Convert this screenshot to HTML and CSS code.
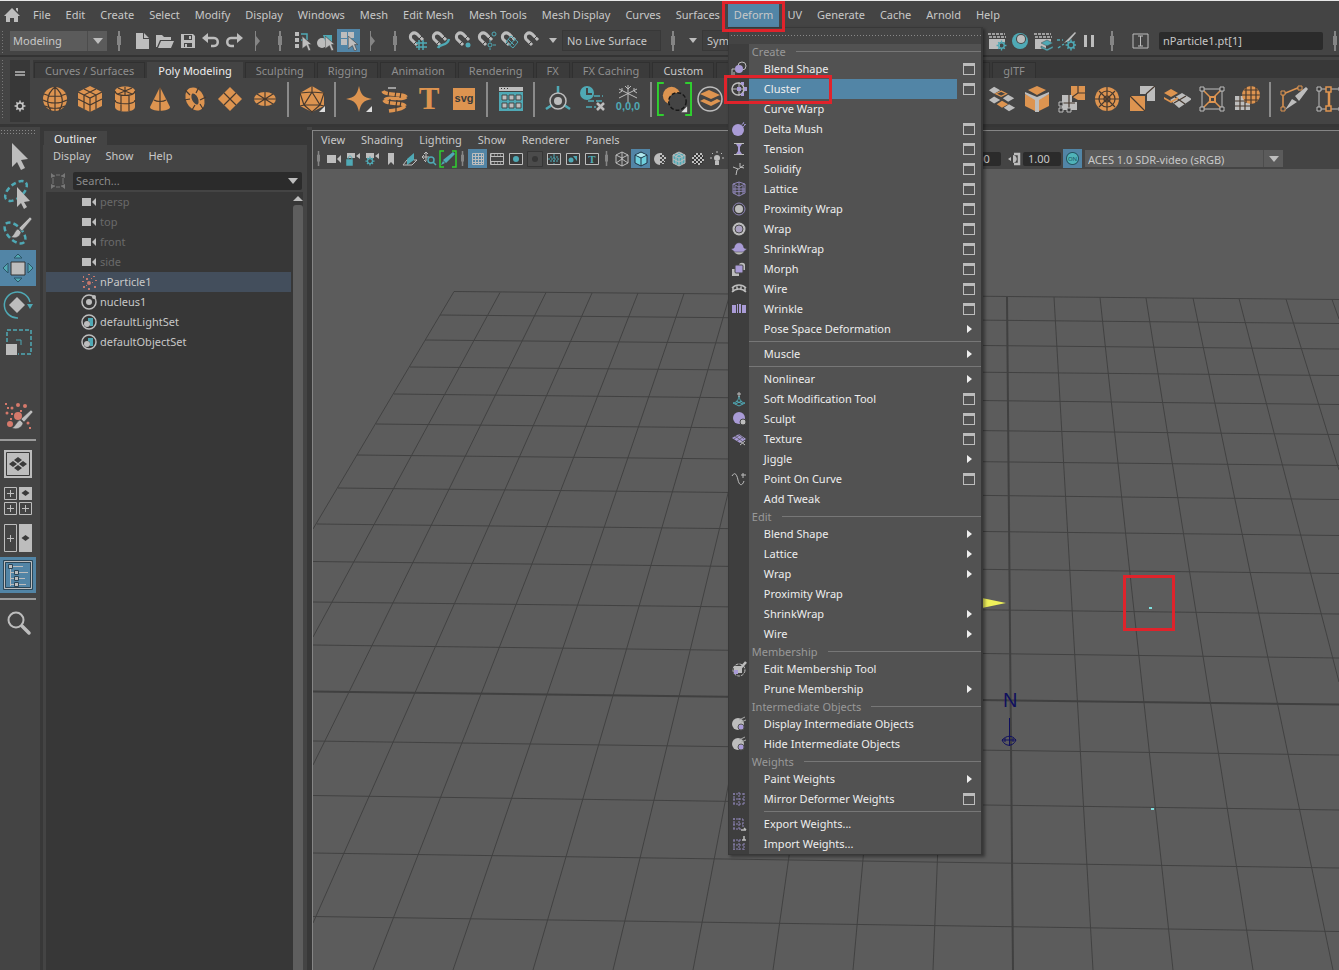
FILE: index.html
```
<!DOCTYPE html>
<html lang="en">
<head>
  <meta charset="UTF-8">
  <meta name="viewport" content="width=device-width, initial-scale=1.0">
  <title>Maya</title>
  <link rel="stylesheet" href="styles.css">
</head>
<body>
  <!-- Icon definitions -->
  <svg class="defs" aria-hidden="true">
    <!-- Status line, 20x20 -->
    <symbol id="home" viewBox="0 0 16 16"><path class="g" d="M8 1l8 8h-2v6h-4v-4H6v4H2V9H0zM12 1h2v4l-2-2z"/></symbol>
    <symbol id="new" viewBox="0 0 20 20"><path class="g" d="M4 2h7v6h6v10H4zM12 2l5 5h-5z"/></symbol>
    <symbol id="open" viewBox="0 0 20 20"><path class="g" d="M1 4h6l2 2h7v3H5l-3 7H1zM6 10h13l-3 7H3z"/></symbol>
    <symbol id="save" viewBox="0 0 20 20"><path class="g" fill-rule="evenodd" d="M3 3h12l2 2v12H3zM6 4v5h8V4zM6 12v4h8v-4z"/><path class="g" d="M11 5h2v3h-2zM7 13h2v3H7z"/></symbol>
    <symbol id="undo" viewBox="0 0 20 20"><path class="gl w2" d="M4 7h9c5 0 5 8 0 8h-3"/><path class="g" d="M1 7l6-5v10z"/></symbol>
    <symbol id="redo" viewBox="0 0 20 20"><path class="gl w2" d="M16 7H7c-5 0-5 8 0 8h3"/><path class="g" d="M19 7l-6-5v10z"/></symbol>
    <symbol id="bar" viewBox="0 0 6 20"><path class="d" d="M2 0h2v20H2zM1 5h4v9H1z"/></symbol>
    <symbol id="fold" viewBox="0 0 6 20"><path class="d" d="M1 0h1v5l4 5-4 5v5H1z"/></symbol>
    <symbol id="down" viewBox="0 0 10 6"><path class="g" d="M0 0h10L5 6z"/></symbol>
    <symbol id="cursor" viewBox="0 0 10 14"><path class="g" stroke="#444" stroke-width=".6" d="M0 0l9 8H6l2 5-2 1-2-5-4 3z"/></symbol>
    <symbol id="selh" viewBox="0 0 20 20"><path class="g" d="M2 1h4v4H2zM2 7h4v4H2zM2 13h4v4H2z"/><path class="tl" d="M8 3h6v6M14 3v3M8 9h3"/><use href="#cursor" x="9" y="5" width="11" height="15"/></symbol>
    <symbol id="selo" viewBox="0 0 20 20"><circle class="g" cx="6" cy="12" r="5"/><path class="t" d="M7 4h9v8l-3-3-4 1z"/><use href="#cursor" x="9" y="5" width="11" height="15"/></symbol>
    <symbol id="selc" viewBox="0 0 20 20"><path class="g" d="M2 1h6v6H2zM9 1h6v6H9zM2 8h6v6H2z"/><path class="tl w2" d="M9 9h3v3"/><use href="#cursor" x="9" y="5" width="11" height="15"/></symbol>
    <symbol id="mag" viewBox="0 0 20 20"><path d="M9 14L3 8C1 4 5 0 9 3l6 6" fill="none" stroke="#bdbdbd" stroke-width="3"/><path d="M6 13l3-3M11 8l3-3" stroke="#444"/></symbol>
    <symbol id="mgrid" viewBox="0 0 20 20"><use href="#mag"/><path class="tl" d="M11 9v10M15 9v10M8 12h11M8 16h11"/></symbol>
    <symbol id="mcurve" viewBox="0 0 20 20"><use href="#mag"/><path class="tl w2" d="M7 17c2-5 9-1 11-9"/></symbol>
    <symbol id="mpoint" viewBox="0 0 20 20"><use href="#mag"/><circle class="t" cx="14" cy="14" r="2.500"/></symbol>
    <symbol id="mproj" viewBox="0 0 20 20"><use href="#mag"/><circle class="tl w1" cx="17" cy="3" r="2"/><circle class="tl w1" cx="13" cy="14" r="2"/><path class="tl w1" d="M13 9v2M13 17v2M16 14h3"/></symbol>
    <symbol id="mplane" viewBox="0 0 20 20"><use href="#mag"/><path class="tl w1" d="M11 5l7 6-5 6-7-6zM15 8l-5 6M14 14l-6-6"/></symbol>
    <symbol id="clap" viewBox="0 0 20 20"><path class="gl" stroke-dasharray="3 1" d="M1 3h17M2 6h17"/><path class="g" d="M2 8h16v3h-5v7H2z"/></symbol>
    <symbol id="gear" viewBox="0 0 20 20"><circle cx="10" cy="10" r="5" fill="none" stroke="currentColor" stroke-width="2.500"/><path d="M10 1v4M10 15v4M1 10h4M15 10h4M4 4l3 3M13 13l3 3M16 4l-3 3M4 16l3-3" stroke="currentColor" stroke-width="2.500"/></symbol>
    <symbol id="rset" viewBox="0 0 20 20"><use href="#clap"/><use href="#gear" class="tc" x="9" y="9" width="11" height="11"/></symbol>
    <symbol id="hyper" viewBox="0 0 20 20"><circle class="t" cx="10" cy="10" r="8"/><circle cx="11" cy="8" r="5" fill="#444"/><circle class="g" cx="11" cy="8" r="4"/></symbol>
    <symbol id="rlay" viewBox="0 0 20 20"><use href="#clap"/><path class="t" stroke="#444" stroke-width=".5" d="M8 12l6-3 6 3-6 3zM8 15l6 3 6-3v2l-6 3-6-3z"/></symbol>
    <symbol id="light" viewBox="0 0 20 20"><path class="g" d="M19 1l1 1-7 8-5 2 4-4z"/><path class="tl" stroke-dasharray="3 2" d="M1 9h6M2 17l6-4"/><use href="#gear" class="tc" x="9" y="8" width="12" height="12"/></symbol>
    <symbol id="pause" viewBox="0 0 20 20"><path class="g" d="M5 4h3v12H5zM12 4h3v12h-3z"/></symbol>
    <symbol id="ibeam" viewBox="0 0 20 20"><path class="gl w1" d="M3 3h15v14H3zM8 5h5M8 15h5M10.500 5v10"/></symbol>

    <!-- Shelf, 28x28 -->
    <symbol id="sphere" viewBox="0 0 28 28"><circle class="o" cx="14" cy="14" r="12"/><path class="k" d="M3 9c6 3 16 3 22 0M2 15c7 4 17 4 24 0M4 21c6 3 14 3 20 0M14 2v24M14 2C4 10 6 20 10 26M14 2c10 8 8 18 4 24"/></symbol>
    <symbol id="cube" viewBox="0 0 28 28"><path class="o" d="M14 1l12 6v14l-12 6-12-6V7z"/><path class="k" d="M2 7l12 6 12-6M14 13v14M8 4l12 6v14M20 4L8 10v14M2 14l12 6 12-6"/></symbol>
    <symbol id="cyl" viewBox="0 0 28 28"><path class="o" d="M4 6c0-6 20-6 20 0v16c0 6-20 6-20 0z"/><path class="k" d="M4 6c0 6 20 6 20 0M4 15c0 5 20 5 20 0M10 10v16M18 10v16M7 3l14 6M21 3L7 9M14 2v8"/></symbol>
    <symbol id="cone" viewBox="0 0 28 28"><path class="o" d="M14 2l10 20c0 5-20 5-20 0z"/><path class="k" d="M14 2v24M8 15c3 2 9 2 12 0"/></symbol>
    <symbol id="torus" viewBox="0 0 28 28"><ellipse cx="14" cy="14" rx="6" ry="9" transform="rotate(-25 14 14)" fill="none" stroke="#dd9450" stroke-width="6"/><path class="k" d="M4 5l5 5M3 15l6-1M11 25l3-5M18 2l-3 6M25 12l-6 3M22 24l-3-5"/></symbol>
    <symbol id="plane" viewBox="0 0 28 28"><path class="o" d="M14 2l12 12-12 12L2 14z"/><path class="k" d="M8 8l12 12M20 8L8 20"/></symbol>
    <symbol id="disc" viewBox="0 0 28 28"><ellipse class="o" cx="14" cy="14" rx="11" ry="7"/><path class="k" d="M3 14h22M14 7v14M6 9l16 10M22 9L6 19"/></symbol>
    <symbol id="more" viewBox="0 0 28 28"><path fill="#ddd" d="M27 21v6h-6z"/></symbol>
    <symbol id="plat" viewBox="0 0 28 28"><path class="o" d="M14 1l12 7v13l-12 6-12-6V8z"/><path class="k" d="M14 1v6L6 20h16L14 7M2 8l12-1 12 1M2 8l4 12-4 1M26 8l-4 12 4 1M6 20l8 7 8-7"/><use href="#more"/></symbol>
    <symbol id="star" viewBox="0 0 28 28"><path class="o" d="M14 1c2 9 4 11 13 13-9 2-11 4-13 13-2-9-4-11-13-13C10 12 12 10 14 1z"/><use href="#more"/></symbol>
    <symbol id="helix" viewBox="0 0 28 28"><path d="M16 3H8" stroke="#bdbdbd" stroke-width="1.500"/><path d="M3 6c2 5 22 2 23 6M26 12c-3 4-19-1-21 3M4 15c2 5 20 2 21 6M25 21c-3 4-10 4-16 5" fill="none" stroke="#dd9450" stroke-width="3.500"/><path class="k" d="M9 5l-1 6M16 6l-1 6M21 7l-1 6M10 14l-1 6M17 15l-1 6M21 16l-1 6M16 21v6"/></symbol>
    <symbol id="table" viewBox="0 0 28 28"><path class="g" d="M2 2h24v4H2z"/><path d="M4 3h1v1H4zM7 3h1v1H7zM10 3h1v1h-1z" fill="#333"/><path class="t" d="M2 7h24v19H2z"/><path d="M5 10h5v5H5zM12 10h5v5h-5zM19 10h5v5h-5zM5 18h5v5H5zM12 18h5v5h-5zM19 18h5v5h-5z" fill="#bdbdbd" stroke="#444"/></symbol>
    <symbol id="pivot" viewBox="0 0 28 28"><path class="tl w2" d="M14 1v7M2 24l6-4M26 24l-6-4"/><circle class="gl" cx="14" cy="16" r="8"/><circle class="g" cx="14" cy="16" r="4"/></symbol>
    <symbol id="hist" viewBox="0 0 28 28"><circle class="t" cx="8" cy="8" r="7"/><path d="M8 3v6h5" fill="none" stroke="#444" stroke-width="2"/><path class="tl" stroke-dasharray="6 2" d="M9 16h15M15 11h9M7 22h10"/><path class="gl w2" d="M18 18l7 7M25 18l-7 7"/></symbol>
    <symbol id="bool" viewBox="0 0 36 36"><path d="M7 1H1v33h6M29 1h6v33h-6" fill="none" stroke="#2fd02f" stroke-width="2"/><circle class="o" cx="15" cy="14" r="9"/><circle cx="21" cy="20" r="9" fill="#444"/><circle cx="21" cy="20" r="9" fill="none" stroke="#181818" stroke-width="1.500" stroke-dasharray="4 2"/><path fill="#ddd" d="M31 25v6h-6z"/></symbol>
    <symbol id="layers" viewBox="0 0 28 28"><circle class="gl" cx="14" cy="14" r="12"/><path class="o" d="M4 9l9-4 11 5-9 4zM4 16l4-2 7 3 6-3 4 2-10 5z"/></symbol>
    <symbol id="sep4" viewBox="0 0 32 28"><path class="g" d="M7 0l7 4-7 4-6-4zM7 11l7 4-7 4-6-4zM23 9l7 4-7 4-6-4zM24 20l7 4-7 4-6-4z"/><path class="o" d="M16 16l7 4-7 4-6-4z"/><path class="ol" d="M15 5l6 3-6 3-6-3z"/></symbol>
    <symbol id="extr" viewBox="0 0 28 28"><path class="o" d="M14 1l9 4-9 5-9-5zM2 9l10 5v12L2 21zM26 9l-10 5v12l10-5z"/><path class="g" d="M2 7l12 5 12-5v2l-10 6v12h-4V15L2 9z"/></symbol>
    <symbol id="bridge" viewBox="0 0 28 28"><path class="o" d="M13 1h14v14h-7l-7-4z"/><path class="k" d="M20 8h7M20 1v7l-7 5"/><path class="g" d="M4 10h10v7h5v8H4z"/><path class="k" d="M4 18h13M11 10v15"/><path fill="#444" class="gl w1" d="M1 17h4v4H1zM1 23h4v4H1zM9 23h4v4H9z"/></symbol>
    <symbol id="wheel" viewBox="0 0 28 28"><circle class="o" cx="14" cy="14" r="12"/><circle class="k" cx="14" cy="14" r="8"/><circle class="k" cx="14" cy="14" r="3"/><path class="k" d="M14 2v24M2 14h24M6 6l16 16M22 6L6 22"/></symbol>
    <symbol id="mirror" viewBox="0 0 28 28"><path class="g" d="M12 1h15v15h-8V9h-7z"/><path class="o" d="M2 11h15v15H2z"/><path class="k" d="M2 11l15 15M18 9l9-8"/></symbol>
    <symbol id="tile" viewBox="0 0 28 28"><path class="g" d="M7 15l12-7 10 6-13 9z"/><path class="k" d="M11 18l12-7M12 12l10 7"/><path class="o" d="M1 8l7-4 7 4-7 4zM1 12l7 4 7-4v2l-7 4-7-4z"/></symbol>
    <symbol id="polyc" viewBox="0 0 28 28"><path class="gl w1" d="M4 4h20v20H4z"/><path class="ol" d="M5 5l18 18M23 5L5 23"/><path class="gl w1" fill="#444" d="M2 2h4v4H2zM22 2h4v4h-4zM2 22h4v4H2zM22 22h4v4h-4z"/><path fill="#444" stroke="#dd9450" stroke-width="2" d="M12 12h5v5h-5z"/></symbol>
    <symbol id="smooth" viewBox="0 0 28 28"><path class="g" d="M2 11h15v14H2z"/><path class="k" d="M2 16h15M2 21h15M7 11v14M12 11v14"/><circle class="o" cx="18" cy="10" r="9"/><path class="k" d="M9 10h18M18 1v18M11 5h14M11 15h14M13 2v16M23 2v16"/></symbol>
    <symbol id="cut" viewBox="0 0 28 28"><path class="ol" d="M3 24V9l17-7"/><path fill="#444" stroke="#dd9450" d="M1 22h4v4H1zM1 6h4v4H1zM18 1h4v4h-4z"/><path class="g" d="M5 25l7-11 5 3zM15 11l11-9 2 2-9 12z"/></symbol>
    <symbol id="loop" viewBox="0 0 28 28"><path class="gl w1" d="M4 4h21M4 24h21M4 4v20M26 4v20"/><path class="ol w2" d="M14 4v20"/><path class="gl w1" fill="#444" d="M2 2h4v4H2zM2 22h4v4H2zM24 2h3v4h-3zM24 22h3v4h-3z"/><path fill="#444" stroke="#dd9450" stroke-width="1.500" d="M11 2h5v5h-5zM11 21h5v5h-5z"/></symbol>

    <!-- Tool box, 30x30 -->
    <symbol id="arrow" viewBox="0 0 30 30"><path class="g" d="M9 1l16 16-7 1 4 8-4 2-4-8-5 5z"/></symbol>
    <symbol id="lasso" viewBox="0 0 30 30"><ellipse class="tl w2" stroke-dasharray="5 3" cx="13" cy="12" rx="13" ry="7" transform="rotate(-40 13 12)"/><path class="g" d="M14 8l13 14-6 1 3 5-3 2-3-6-4 4z"/></symbol>
    <symbol id="pbrush" viewBox="0 0 30 30"><ellipse class="tl w2" stroke-dasharray="5 3" cx="12" cy="17" rx="13" ry="7" transform="rotate(45 12 17)"/><path class="g" stroke="#444" stroke-width=".5" d="M27 1l2 2-10 12-3-3zM15 13l3 3c-1 5-6 7-10 5 4-2 3-6 7-8z"/></symbol>
    <symbol id="move" viewBox="0 0 30 30"><path class="g" stroke="#333" d="M8 9h14v13H8z"/><path d="M15 1l4 4h-8zM15 29l4-4h-8zM0 15l5-5v10zM30 15l-5-5v10z" fill="#53abb4" stroke="#2c5568"/></symbol>
    <symbol id="rot" viewBox="0 0 30 30"><path class="tl" d="M15 28A13 13 0 1 1 27 12"/><path class="t" d="M24 14h6l-3 5z"/><path class="g" d="M14 7l8 8-8 8-8-8z"/></symbol>
    <symbol id="scale" viewBox="0 0 30 30"><path class="tl" stroke-dasharray="4 2" d="M4 15V3h24v24H15"/><path class="tl w1" d="M13 13h5v5"/><path class="g" d="M3 17h11v11H3z"/></symbol>
    <symbol id="npaint" viewBox="0 0 30 30"><g fill="#d5796b"><circle cx="15" cy="15" r="4"/><circle cx="7" cy="23" r="3"/><circle cx="15" cy="4" r="2"/><circle cx="22" cy="5" r="2"/><circle cx="9" cy="7" r="1.500"/><circle cx="4" cy="12" r="1.500"/><circle cx="25" cy="22" r="1.500"/><path d="M2 2h2v2H2zM4 6h2v2H4zM8 12h2v2H8zM7 17h2v2H7zM17 9h2v2h-2zM26 26h2v2h-2z"/></g><path class="g" stroke="#444" stroke-width=".5" d="M28 9l2 2-9 10-3-3zM17 19l3 3c-1 5-7 7-11 5 4-2 4-6 8-8z"/></symbol>
    <symbol id="single" viewBox="0 0 30 30"><path class="g" d="M1 1h28v28H1z"/><path d="M3.500 3.500h23v23h-23z" fill="none" stroke="#3a3a3a"/><path d="M15 8l4 3-4 3-4-3zM10 12l4 3-4 3-4-3zM20 12l4 3-4 3-4-3zM15 16l4 3-4 3-4-3z" fill="#3a3a3a"/></symbol>
    <symbol id="four" viewBox="0 0 30 30"><path class="gl w1" d="M1.500 1.500h12v12h-12zM1.500 16.500h12v12h-12zM16.500 16.500h12v12h-12zM4 7.500h7M7.500 4v7M4 22.500h7M7.500 19v7M19 22.500h7M22.500 19v7"/><path class="g" d="M16 1h13v13H16z"/><path d="M22.500 4l4 3-4 3-4-3z" fill="#3a3a3a"/></symbol>
    <symbol id="two" viewBox="0 0 30 30"><path class="gl w1" d="M1.500 1.500h12v27h-12zM4 15.500h7M7.500 12v7"/><path class="g" d="M16 1h13v28H16z"/><path d="M22.500 12l4 3-4 3-4-3z" fill="#3a3a3a"/></symbol>
    <symbol id="outl" viewBox="0 0 30 30"><path d="M.5.500h29v29H.5zM2.500 2.500h25v25h-25z" fill="none" stroke="#2b4657"/><path class="gl w1" d="M1.500 1.500h27v27h-27zM7.500 8v18M8 12.500h4M8 18.500h4M8 24.500h4M10 6.500h10M16 12.500h9M16 18.500h6M16 24.500h7"/><path class="g" stroke="#2b4657" d="M5.500 4.500h4v4h-4zM11.500 10.500h4v4h-4zM11.500 16.500h4v4h-4zM11.500 22.500h4v4h-4z"/></symbol>
    <symbol id="find" viewBox="0 0 30 30"><circle cx="13" cy="12" r="7.500" fill="none" stroke="#bdbdbd" stroke-width="2"/><path d="M19 18l7 7" stroke="#bdbdbd" stroke-width="3.500" stroke-linecap="round"/></symbol>

    <!-- Outliner and view panel, 16x16 -->
    <symbol id="cam" viewBox="0 0 16 16"><path class="g" d="M1 4h9v8H1zM11 8l4-4v8z"/></symbol>
    <symbol id="npart" viewBox="0 0 16 16"><g fill="#c5786c"><circle cx="8" cy="9" r="2"/><path d="M2 2h1v2H2zM7 0h2v1H7zM12 2h2v1h-2zM1 7h2v1H1zM14 6h2v1h-2zM2 12h2v2H2zM7 14h2v2H7zM13 12h2v2h-2zM5 4h2v2H5zM10 4h1v1h-1zM5 11h1v1H5zM11 8h1v1h-1z"/></g></symbol>
    <symbol id="nucl" viewBox="0 0 16 16"><circle class="gl" cx="8" cy="8" r="7"/><circle class="g" cx="8" cy="8" r="3"/><circle class="g" cx="13" cy="3" r="2"/></symbol>
    <symbol id="set" viewBox="0 0 16 16"><circle class="gl" cx="8" cy="8" r="7"/><path class="t" d="M7 4h5v8H9V8L7 7z"/><circle class="g" cx="6" cy="10" r="3"/></symbol>
    <symbol id="frame" viewBox="0 0 16 16"><path d="M3 3h2M11 3h2M3 13h2M11 13h2M3 5v6M13 5v6M6 2h4M6 14h4" stroke="#777" fill="none"/><path fill="#777" d="M1 0l4 3-4 2zM15 0l-4 3 4 2zM1 16l4-3-4-2zM15 16l-4-3 4-2z"/></symbol>
    <symbol id="camlock" viewBox="0 0 16 16"><path class="g" d="M2 2h8v5H2zM11 5l4-3v6z"/><path class="t" stroke="#444" stroke-width=".5" d="M1 8h7v7H1z"/><path class="tl w1" d="M3 8c0-4 4-4 4 0"/></symbol>
    <symbol id="camgear" viewBox="0 0 16 16"><path class="g" d="M2 2h8v5H2zM11 5l4-3v6z"/><use href="#gear" class="tc" x="1" y="5" width="10" height="10"/></symbol>
    <symbol id="mark" viewBox="0 0 16 16"><path class="g" d="M5 2h6v12l-3-3-3 3z"/></symbol>
    <symbol id="imgp" viewBox="0 0 16 16"><path class="t" d="M5 8l7-6v7l-7 5z"/><path class="gl w1" d="M5 9l-4 5h9l5-5h-3"/></symbol>
    <symbol id="pan" viewBox="0 0 16 16"><path class="gl w1" d="M5 1v9M1 6h7M3 3l2-2 2 2M3 4L1 6l2 2M3 9l2 2"/><circle class="tl" cx="10" cy="9" r="3"/><path class="tl" d="M12 11l3 3"/></symbol>
    <symbol id="grease" viewBox="0 0 18 18"><path d="M5 1H1v16h4M13 1h4v16h-4" fill="none" stroke="#2fd02f" stroke-width="1.500"/><path class="t" d="M14 2l2 2-9 9-3-3zM4 11l2 2-4 2z"/></symbol>
    <symbol id="grid" viewBox="0 0 16 16"><path class="gl w1" d="M2.500 2.500h11v11h-11zM5.500 2v12M8.500 2v12M11.500 2v12M2 5.500h12M2 8.500h12M2 11.500h12"/></symbol>
    <symbol id="film" viewBox="0 0 16 16"><path class="gl w1" d="M1.500 2.500h13v11h-13zM1 5.500h14M1 10.500h14"/><path class="gl w1" stroke-dasharray="1 2" d="M2 4h12M2 12h12"/></symbol>
    <symbol id="gate" viewBox="0 0 16 16"><path class="gl w1" fill="#303030" d="M1.500 2.500h13v11h-13z"/><circle class="t" cx="8" cy="8" r="3"/></symbol>
    <symbol id="mask" viewBox="0 0 16 16"><path d="M.5.500h15v15H.5z" fill="#4b4b4b" stroke="#363636"/><circle cx="8" cy="8" r="3" fill="#363636"/></symbol>
    <symbol id="chart" viewBox="0 0 16 16"><path class="gl w1" fill="#303030" d="M1.500 2.500h13v11h-13z"/><path class="tl w1" stroke-dasharray="2 1" d="M2 8h12M8 3v10M4 6h8M4 10h8"/></symbol>
    <symbol id="safe" viewBox="0 0 16 16"><path class="gl w1" fill="#303030" d="M1.500 2.500h13v11h-13z"/><circle class="t" cx="6" cy="9" r="2.500"/><path class="t" d="M8 5h4v5z"/></symbol>
    <symbol id="wirec" viewBox="0 0 16 16"><path class="gl w1" d="M8 1l6 3v8l-6 3-6-3V4zM2 4l6 3 6-3M8 7v8M2 12l6-4 6 4M8 1v7"/></symbol>
    <symbol id="solid" viewBox="0 0 16 16"><path fill="#6fd0dd" stroke="#234" d="M8 1l6 3v8l-6 3-6-3V4z"/><path d="M2 4l6 3 6-3M8 7v8" stroke="#234" fill="none"/><path fill="#b5e6ec" d="M8 2l5 2-5 2-5-2z"/></symbol>
    <symbol id="half" viewBox="0 0 16 16"><path class="g" d="M8 2v12A6 6 0 0 1 8 2zM8 2h2v2H8zM10 4h2v2h-2zM8 6h2v2H8zM12 6h2v2h-2zM10 8h2v2h-2zM8 10h2v2H8zM12 10h1v1h-1zM10 12h2v1h-2z"/></symbol>
    <symbol id="texc" viewBox="0 0 16 16"><path class="t" d="M8 1l6 3v8l-6 3-6-3V4z"/><path class="gl w1" d="M8 1l6 3v8l-6 3-6-3V4zM2 4l6 3 6-3M8 7v8M5 2l6 3v8M11 2L5 5v8M2 8l6 3 6-3"/></symbol>
    <symbol id="check" viewBox="0 0 16 16"><circle cx="8" cy="8" r="6" fill="#333"/><path class="g" d="M6 2h2v2H6zM10 2h2v2h-2zM4 4h2v2H4zM8 4h2v2H8zM12 4h1v2h-1zM2 6h2v2H2zM6 6h2v2H6zM10 6h2v2h-2zM4 8h2v2H4zM8 8h2v2H8zM12 8h2v2h-2zM2 10h2v2H2zM6 10h2v2H6zM10 10h2v2h-2zM4 12h2v1H4zM8 12h2v2H8z"/></symbol>
    <symbol id="bulb" viewBox="0 0 16 16"><circle class="g" cx="8" cy="7" r="3"/><path class="g" d="M6 10h4v4H6z"/><path class="gl w1" d="M8 0v2M1 7h2M13 7h2M3 2l1 1M13 2l-1 1"/></symbol>
    <symbol id="gamma" viewBox="0 0 16 16"><path class="gl w2" d="M8 3h5v10H8"/><path class="g" d="M7 4c5 1 5 7 0 8zM2 8l3-2v4z"/></symbol>

    <!-- Deform menu, 16x16 -->
    <symbol id="m-blend" viewBox="0 0 16 16"><circle class="gl w1" cx="11" cy="5" r="4"/><circle class="p" cx="8" cy="8" r="4"/><path class="gl w1" d="M1 14V8h3M3 14v-3"/></symbol>
    <symbol id="m-cluster" viewBox="0 0 16 16"><circle class="gl" cx="7" cy="8" r="6"/><path class="gl w1" d="M1 8h13M8 1v14"/><path class="p" d="M6 6h4v4H6zM10 1h3v3h-3zM13 6h3v4h-3zM10 12h3v3h-3z"/></symbol>
    <symbol id="m-delta" viewBox="0 0 16 16"><circle class="p" cx="7" cy="9" r="6"/><path class="pl" d="M10 5l3-4M12 6l3-3M12 2l2 2"/></symbol>
    <symbol id="m-tens" viewBox="0 0 16 16"><path class="gl w1" d="M3 2.500h10M3 13.500h10"/><path class="p" d="M5 3h6L9 6v4l2 3H5l2-3V6z"/></symbol>
    <symbol id="m-solid" viewBox="0 0 16 16"><path class="gl w1" d="M5 14l1-5 7-5M2 6l5 2M9 2v4l4 1"/></symbol>
    <symbol id="m-latt" viewBox="0 0 16 16"><path class="pl" d="M2 3l6-2 6 2v9l-6 3-6-3zM2 3l6 3 6-3M2 8h12M8 1v14M4 5v8M12 5v8M2 11l12-1"/></symbol>
    <symbol id="m-prox" viewBox="0 0 16 16"><circle class="pl" cx="8" cy="8" r="6"/><circle class="g" cx="8" cy="8" r="4"/></symbol>
    <symbol id="m-wrap" viewBox="0 0 16 16"><circle class="g" cx="8" cy="8" r="6.500"/><circle cx="8" cy="8" r="4" fill="#aaa1c0" stroke="#4a4a4a"/></symbol>
    <symbol id="m-shrink" viewBox="0 0 16 16"><path class="g" d="M2 9h12c-3 6-9 6-12 0z"/><path class="p" stroke="#3e3e3e" stroke-width=".5" d="M0 8l3-1c1-7 9-7 10 0l3 1-4 3H4z"/></symbol>
    <symbol id="m-morph" viewBox="0 0 16 16"><path class="g" d="M1 8h7v7H1zM8 4c0-3 6-3 6 0v5h-6z"/><rect class="p" x="4" y="4" width="8" height="8" rx="1" stroke="#444"/></symbol>
    <symbol id="m-wire" viewBox="0 0 16 16"><path class="gl" d="M1 7c4-4 10-4 14 0M1 11c4-4 10-4 14 0M2 6v5M6 4v5M10 4v5M14 6v5"/></symbol>
    <symbol id="m-wrink" viewBox="0 0 16 16"><path class="p" d="M1 4h4v8H1zM6 3h1v9H6zM8 3h2v9H8zM11 4h4v8h-4z"/></symbol>
    <symbol id="m-soft" viewBox="0 0 16 16"><path class="tl w1" d="M2 12c5-1 5-3 6-7 1 4 1 6 6 7l-6 3zM4 13l7-3M5 10l7 3"/><path class="gl w1" d="M8 1v5M6 3h4"/></symbol>
    <symbol id="m-sculpt" viewBox="0 0 16 16"><circle class="p" cx="8" cy="7" r="6"/><circle class="g" cx="12" cy="11" r="3" stroke="#444"/></symbol>
    <symbol id="m-text" viewBox="0 0 16 16"><path class="p" d="M1 7l7-4 7 5-6 4z"/><path d="M4 5l7 5M7 3l6 5M3 8l6-4M6 10l6-4" stroke="#444" stroke-width=".6"/><path class="gl w1" d="M9 10l5 4M14 10l-5 4"/></symbol>
    <symbol id="m-point" viewBox="0 0 16 16"><path class="gl w1" d="M1 5c3-5 5-1 6 4s4 7 6 1M12 2v5M10 4h5"/></symbol>
    <symbol id="m-edit" viewBox="0 0 16 16"><circle class="gl w1" stroke-dasharray="3 1" cx="8" cy="9" r="6"/><path class="g" d="M3 5h8v7H3z"/><path class="p" d="M3 9h4v4H3z"/><path class="gl w2" d="M15 1L8 9"/></symbol>
    <symbol id="m-disp" viewBox="0 0 16 16"><circle class="g" cx="7" cy="8" r="6"/><circle cx="10" cy="11" r="3" class="p" stroke="#555"/><path d="M8 4l6-3M10 6l5-2" stroke="#aaa"/></symbol>
    <symbol id="m-mirr" viewBox="0 0 16 16"><path class="pl" stroke-dasharray="2 1" d="M2 3h12M2 8h12M2 13h12M3 2v12M8 1v14M13 2v12"/></symbol>
    <symbol id="m-exp" viewBox="0 0 16 16"><path class="pl" stroke-dasharray="2 1" d="M2 3h10M2 8h10M2 13h8M3 2v12M8 2v12M12 3v8"/><path class="gl" d="M10 14h5M13 12l2 2"/></symbol>
    <symbol id="m-imp" viewBox="0 0 16 16"><path class="pl" stroke-dasharray="2 1" d="M2 4h8M2 9h12M2 13h12M3 4v10M8 4v10M13 7v7"/><path class="gl" d="M13 0v4M11 4h4"/></symbol>
  </svg>

  <nav class="menubar" aria-label="Main menu">
    <svg class="home"><use href="#home"/></svg>
    <ul>
      <li><button>File</button></li>
      <li><button>Edit</button></li>
      <li><button>Create</button></li>
      <li><button>Select</button></li>
      <li><button>Modify</button></li>
      <li><button>Display</button></li>
      <li><button>Windows</button></li>
      <li><button>Mesh</button></li>
      <li><button>Edit Mesh</button></li>
      <li><button>Mesh Tools</button></li>
      <li><button>Mesh Display</button></li>
      <li><button>Curves</button></li>
      <li><button>Surfaces</button></li>
      <li class="open">
        <button>Deform</button>
        <div class="dropdown">
          <div class="tearoff"></div>
          <ul class="items">
            <li class="head">Create</li>
            <li><svg><use href="#m-blend"/></svg><button>Blend Shape</button><button class="opt" aria-label="Blend Shape options"></button></li>
            <li class="hot"><svg><use href="#m-cluster"/></svg><button>Cluster</button><button class="opt" aria-label="Cluster options"></button></li>
            <li><button>Curve Warp</button></li>
            <li><svg><use href="#m-delta"/></svg><button>Delta Mush</button><button class="opt" aria-label="Delta Mush options"></button></li>
            <li><svg><use href="#m-tens"/></svg><button>Tension</button><button class="opt" aria-label="Tension options"></button></li>
            <li><svg><use href="#m-solid"/></svg><button>Solidify</button><button class="opt" aria-label="Solidify options"></button></li>
            <li><svg><use href="#m-latt"/></svg><button>Lattice</button><button class="opt" aria-label="Lattice options"></button></li>
            <li><svg><use href="#m-prox"/></svg><button>Proximity Wrap</button><button class="opt" aria-label="Proximity Wrap options"></button></li>
            <li><svg><use href="#m-wrap"/></svg><button>Wrap</button><button class="opt" aria-label="Wrap options"></button></li>
            <li><svg><use href="#m-shrink"/></svg><button>ShrinkWrap</button><button class="opt" aria-label="ShrinkWrap options"></button></li>
            <li><svg><use href="#m-morph"/></svg><button>Morph</button><button class="opt" aria-label="Morph options"></button></li>
            <li><svg><use href="#m-wire"/></svg><button>Wire</button><button class="opt" aria-label="Wire options"></button></li>
            <li><svg><use href="#m-wrink"/></svg><button>Wrinkle</button><button class="opt" aria-label="Wrinkle options"></button></li>
            <li class="sub"><button>Pose Space Deformation</button></li>
            <li class="line"></li>
            <li class="sub"><button>Muscle</button></li>
            <li class="line"></li>
            <li class="sub"><button>Nonlinear</button></li>
            <li><svg><use href="#m-soft"/></svg><button>Soft Modification Tool</button><button class="opt" aria-label="Soft Modification options"></button></li>
            <li><svg><use href="#m-sculpt"/></svg><button>Sculpt</button><button class="opt" aria-label="Sculpt options"></button></li>
            <li><svg><use href="#m-text"/></svg><button>Texture</button><button class="opt" aria-label="Texture options"></button></li>
            <li class="sub"><button>Jiggle</button></li>
            <li><svg><use href="#m-point"/></svg><button>Point On Curve</button><button class="opt" aria-label="Point On Curve options"></button></li>
            <li><button>Add Tweak</button></li>
            <li class="head">Edit</li>
            <li class="sub"><button>Blend Shape</button></li>
            <li class="sub"><button>Lattice</button></li>
            <li class="sub"><button>Wrap</button></li>
            <li><button>Proximity Wrap</button></li>
            <li class="sub"><button>ShrinkWrap</button></li>
            <li class="sub"><button>Wire</button></li>
            <li class="head">Membership</li>
            <li><svg><use href="#m-edit"/></svg><button>Edit Membership Tool</button></li>
            <li class="sub"><button>Prune Membership</button></li>
            <li class="head">Intermediate Objects</li>
            <li><svg><use href="#m-disp"/></svg><button>Display Intermediate Objects</button></li>
            <li><svg><use href="#m-disp"/></svg><button>Hide Intermediate Objects</button></li>
            <li class="head">Weights</li>
            <li class="sub"><button>Paint Weights</button></li>
            <li><svg><use href="#m-mirr"/></svg><button>Mirror Deformer Weights</button><button class="opt" aria-label="Mirror options"></button></li>
            <li class="line short"></li>
            <li><svg><use href="#m-exp"/></svg><button>Export Weights...</button></li>
            <li><svg><use href="#m-imp"/></svg><button>Import Weights...</button></li>
          </ul>
        </div>
      </li>
      <li><button>UV</button></li>
      <li><button>Generate</button></li>
      <li><button>Cache</button></li>
      <li><button>Arnold</button></li>
      <li><button>Help</button></li>
    </ul>
  </nav>

  <div class="status">
    <div class="combo mode">
      <select aria-label="Menu set"><option>Modeling</option></select>
      <span class="drop"><svg><use href="#down"/></svg></span>
    </div>
    <svg class="bar"><use href="#bar"/></svg>
    <button aria-label="New scene"><svg><use href="#new"/></svg></button>
    <button aria-label="Open scene"><svg><use href="#open"/></svg></button>
    <button aria-label="Save scene"><svg><use href="#save"/></svg></button>
    <button aria-label="Undo"><svg><use href="#undo"/></svg></button>
    <button aria-label="Redo"><svg><use href="#redo"/></svg></button>
    <svg class="bar"><use href="#fold"/></svg>
    <svg class="bar"><use href="#bar"/></svg>
    <button aria-label="Select by hierarchy"><svg><use href="#selh"/></svg></button>
    <button aria-label="Select by object"><svg><use href="#selo"/></svg></button>
    <button class="on" aria-label="Select by component"><svg><use href="#selc"/></svg></button>
    <svg class="bar"><use href="#fold"/></svg>
    <svg class="bar"><use href="#bar"/></svg>
    <button aria-label="Snap to grids"><svg><use href="#mgrid"/></svg></button>
    <button aria-label="Snap to curves"><svg><use href="#mcurve"/></svg></button>
    <button aria-label="Snap to points"><svg><use href="#mpoint"/></svg></button>
    <button aria-label="Snap to projected center"><svg><use href="#mproj"/></svg></button>
    <button aria-label="Snap to view planes"><svg><use href="#mplane"/></svg></button>
    <button aria-label="Make live"><svg><use href="#mag"/></svg></button>
    <svg class="caret"><use href="#down"/></svg>
    <input class="live" aria-label="Live surface" value="No Live Surface">
    <svg class="bar"><use href="#bar"/></svg>
    <svg class="caret"><use href="#down"/></svg>
    <input class="sym" aria-label="Symmetry" value="Symmetry: Off">
    <button aria-label="Render settings"><svg><use href="#rset"/></svg></button>
    <button aria-label="Hypershade"><svg><use href="#hyper"/></svg></button>
    <button aria-label="Render setup"><svg><use href="#rlay"/></svg></button>
    <button aria-label="Light editor"><svg><use href="#light"/></svg></button>
    <button aria-label="Pause"><svg><use href="#pause"/></svg></button>
    <svg class="bar"><use href="#bar"/></svg>
    <button class="entry" aria-label="Input mode"><svg><use href="#ibeam"/></svg></button>
    <input class="name" aria-label="Object name" value="nParticle1.pt[1]">
    <svg class="bar"><use href="#bar"/></svg>
  </div>

  <div class="shelf">
    <div class="shelf-side">
      <span class="lines"></span>
      <svg><use href="#gear"/></svg>
    </div>
    <div class="shelf-main">
      <div class="tabs">
        <button>Curves / Surfaces</button>
        <button class="active">Poly Modeling</button>
        <button>Sculpting</button>
        <button>Rigging</button>
        <button>Animation</button>
        <button>Rendering</button>
        <button>FX</button>
        <button>FX Caching</button>
        <button class="bright">Custom</button>
        <span class="blank"></span>
        <button>glTF</button>
      </div>
      <div class="tools">
        <button aria-label="Sphere"><svg><use href="#sphere"/></svg></button>
        <button aria-label="Cube"><svg><use href="#cube"/></svg></button>
        <button aria-label="Cylinder"><svg><use href="#cyl"/></svg></button>
        <button aria-label="Cone"><svg><use href="#cone"/></svg></button>
        <button aria-label="Torus"><svg><use href="#torus"/></svg></button>
        <button aria-label="Plane"><svg><use href="#plane"/></svg></button>
        <button aria-label="Disc"><svg><use href="#disc"/></svg></button>
        <i></i>
        <button aria-label="Platonic solid"><svg><use href="#plat"/></svg></button>
        <i></i>
        <button aria-label="Super shape"><svg><use href="#star"/></svg></button>
        <button aria-label="Helix"><svg><use href="#helix"/></svg></button>
        <button aria-label="Type"><svg viewBox="0 0 28 28"><text class="type-t" x="14" y="24" text-anchor="middle">T</text></svg></button>
        <button aria-label="SVG"><svg viewBox="0 0 28 28"><path class="o" d="M3 3h22v22H3z"/><text class="svg-t" x="14" y="17" text-anchor="middle">svg</text></svg></button>
        <i></i>
        <button aria-label="Content browser"><svg><use href="#table"/></svg></button>
        <i></i>
        <button aria-label="Center pivot"><svg><use href="#pivot"/></svg></button>
        <button aria-label="Delete history"><svg><use href="#hist"/></svg></button>
        <button aria-label="Freeze transforms"><svg viewBox="0 0 28 28"><path class="gl w1" d="M14 0v17M5 4l18 9M23 4L5 13M11 1l3 3 3-3M5 8l3-2V3M23 8l-3-2V3"/><text class="zero-t" x="14" y="25" text-anchor="middle">0,0,0</text></svg></button>
        <i></i>
        <button class="wide" aria-label="Booleans"><svg><use href="#bool"/></svg></button>
        <button aria-label="Combine"><svg><use href="#layers"/></svg></button>
        <div class="group">
          <button aria-label="Separate"><svg><use href="#sep4"/></svg></button>
          <button aria-label="Extrude"><svg><use href="#extr"/></svg></button>
          <button aria-label="Bridge"><svg><use href="#bridge"/></svg></button>
          <button aria-label="Circularize"><svg><use href="#wheel"/></svg></button>
          <button aria-label="Mirror"><svg><use href="#mirror"/></svg></button>
          <button aria-label="Duplicate face"><svg><use href="#tile"/></svg></button>
          <button aria-label="Poke"><svg><use href="#polyc"/></svg></button>
          <button aria-label="Smooth"><svg><use href="#smooth"/></svg></button>
          <i></i>
          <button aria-label="Multi-cut"><svg><use href="#cut"/></svg></button>
          <button aria-label="Edge loop"><svg><use href="#loop"/></svg></button>
        </div>
      </div>
    </div>
  </div>

  <main>
    <div class="toolbox">
      <div class="grip"></div>
      <button aria-label="Select"><svg><use href="#arrow"/></svg></button>
      <button aria-label="Lasso"><svg><use href="#lasso"/></svg></button>
      <button aria-label="Paint select"><svg><use href="#pbrush"/></svg></button>
      <button class="on" aria-label="Move"><svg><use href="#move"/></svg></button>
      <button aria-label="Rotate"><svg><use href="#rot"/></svg></button>
      <button aria-label="Scale"><svg><use href="#scale"/></svg></button>
      <button class="last" aria-label="Last tool"><svg><use href="#npaint"/></svg></button>
      <hr>
      <button aria-label="Single view"><svg><use href="#single"/></svg></button>
      <button aria-label="Four views"><svg><use href="#four"/></svg></button>
      <button aria-label="Two views"><svg><use href="#two"/></svg></button>
      <button class="on" aria-label="Outliner view"><svg><use href="#outl"/></svg></button>
      <hr>
      <button aria-label="Search"><svg><use href="#find"/></svg></button>
    </div>

    <section class="outliner">
      <div class="title"><h2>Outliner</h2></div>
      <div class="body">
        <div class="panel-menu">
          <button>Display</button>
          <button>Show</button>
          <button>Help</button>
        </div>
        <div class="search">
          <svg class="frame"><use href="#frame"/></svg>
          <div class="box">
            <input type="text" aria-label="Search" placeholder="Search...">
            <svg class="arrow"><use href="#down"/></svg>
          </div>
        </div>
        <div class="tree">
          <ul>
            <li class="dim"><svg><use href="#cam"/></svg>persp</li>
            <li class="dim"><svg><use href="#cam"/></svg>top</li>
            <li class="dim"><svg><use href="#cam"/></svg>front</li>
            <li class="dim"><svg><use href="#cam"/></svg>side</li>
            <li class="selected"><svg><use href="#npart"/></svg>nParticle1</li>
            <li><svg><use href="#nucl"/></svg>nucleus1</li>
            <li><svg><use href="#set"/></svg>defaultLightSet</li>
            <li><svg><use href="#set"/></svg>defaultObjectSet</li>
          </ul>
          <div class="scroll"><span class="up"></span><span class="thumb"></span></div>
        </div>
      </div>
    </section>

    <section class="view">
      <div class="panel-menu">
        <button>View</button>
        <button>Shading</button>
        <button>Lighting</button>
        <button>Show</button>
        <button>Renderer</button>
        <button>Panels</button>
      </div>
      <div class="view-tools">
        <svg class="bar"><use href="#bar"/></svg>
        <button aria-label="Camera"><svg><use href="#cam"/></svg></button>
        <button aria-label="Lock camera"><svg><use href="#camlock"/></svg></button>
        <button aria-label="Camera attributes"><svg><use href="#camgear"/></svg></button>
        <button aria-label="Bookmark"><svg><use href="#mark"/></svg></button>
        <button aria-label="Image plane"><svg><use href="#imgp"/></svg></button>
        <button aria-label="Pan and zoom"><svg><use href="#pan"/></svg></button>
        <button class="full" aria-label="Grease pencil"><svg><use href="#grease"/></svg></button>
        <svg class="bar"><use href="#bar"/></svg>
        <button class="on" aria-label="Grid"><svg><use href="#grid"/></svg></button>
        <button aria-label="Film gate"><svg><use href="#film"/></svg></button>
        <button aria-label="Resolution gate"><svg><use href="#gate"/></svg></button>
        <button aria-label="Gate mask"><svg><use href="#mask"/></svg></button>
        <button aria-label="Field chart"><svg><use href="#chart"/></svg></button>
        <button aria-label="Safe action"><svg><use href="#safe"/></svg></button>
        <button aria-label="Safe title"><svg viewBox="0 0 16 16"><path class="gl w1" fill="#303030" d="M1.500 2.500h13v11h-13z"/><text class="safe-t" x="8" y="12" text-anchor="middle">T</text></svg></button>
        <svg class="bar"><use href="#bar"/></svg>
        <button aria-label="Wireframe"><svg><use href="#wirec"/></svg></button>
        <button class="on" aria-label="Shaded"><svg><use href="#solid"/></svg></button>
        <button aria-label="Default material"><svg><use href="#half"/></svg></button>
        <button aria-label="Wireframe on shaded"><svg><use href="#texc"/></svg></button>
        <button aria-label="Textured"><svg><use href="#check"/></svg></button>
        <button aria-label="Lights"><svg><use href="#bulb"/></svg></button>
        <input class="exposure" aria-label="Exposure" value="0.00">
        <button aria-label="Gamma"><svg><use href="#gamma"/></svg></button>
        <input aria-label="Gamma value" value="1.00">
        <button class="on cm">ON</button>
        <div class="combo space">
          <select aria-label="View transform"><option>ACES 1.0 SDR-video (sRGB)</option></select>
          <span class="drop"><svg><use href="#down"/></svg></span>
        </div>
      </div>
      <!-- Perspective ground grid -->
      <svg class="scene" viewBox="313 169 1026 801" preserveAspectRatio="xMinYMin slice">
        <path class="grid" d="M454 291.500L1339 299.500M440 315L1339 323.500M425 340L1339 349M410 367L1339 375.500M394 394L1339 404.500M376 424L1339 434.500M357 455L1339 465.500M338 488L1339 499.500M317 524L1339 535.500M313 561.500L1339 573.500M313 602L1339 614M313 645L1339 658M313 741L1339 755M313 795.500L1339 810M313 853L1339 868M313 916.500L1339 931.500"/>
        <path class="grid" d="M454 291.500L313 529M500 292.500L313 637M546 292.500L313 765M592 293L313 923M638 293L373 970M684 293.500L453 970M730 294L533 970M776 294.500L613 970M822 295L693 970M868 295L773 970M914 295.500L853 970M960 296L933 970M1054 297L1093 970M1100 297.500L1173 970M1146 298L1253 970M1193 298L1333 970M1239 298.500L1339 682M1286 299L1339 470M1332 299.500L1339 319"/>
        <path class="axis" d="M313 691.500L1339 704.500M1007 297L1013 970"/>
        <path d="M982 598l24 5-24 5z" fill="#eef05a"/>
        <text class="north" x="1003" y="707">N</text>
        <path d="M1009.500 718v28M1002 740c5-5 10-5 14 0M1002 740c3 7 11 7 14 0zM1005 742v-4M1013 742v-4" fill="none" stroke="#10105e"/>
        <path d="M1149 607h3v2h-3zM1151 808h3v2h-3z" fill="#7fe0e0"/>
        <rect x="1124.500" y="576.500" width="49" height="53" fill="none" stroke="#e0232b" stroke-width="3"/>
      </svg>
    </section>
  </main>
</body>
</html>
```
FILE: styles.css
```
*, *::before, *::after {
  box-sizing: border-box;
}
body {
  margin: 0;
  height: 100vh;
  display: flex;
  flex-direction: column;
  overflow: hidden;
  background: #444;
  border-top: 1px solid #e8e8e8;
  color: #c8c8c8;
  font: 11px/20px "Noto Sans", "Open Sans", sans-serif;
}
ul {
  list-style: none;
  margin: 0;
  padding: 0;
}
button, input, select {
  font: inherit;
  color: inherit;
  background: none;
  border: none;
  border-radius: 0;
  margin: 0;
  padding: 0;
  outline: none;
  white-space: nowrap;
}
select {
  appearance: none;
}
svg {
  display: block;
  flex: none;
}
.defs {
  position: absolute;
  width: 0;
  height: 0;
}

/* icon paints */
.g { fill: #bdbdbd; }
.t { fill: #4fa9b5; }
.o { fill: #dd9450; }
.p { fill: #a99bd6; }
.d { fill: #858585; }
.gl { fill: none; stroke: #bdbdbd; stroke-width: 1.5; }
.gl[fill] { fill: #3a3a3a; }
.tl { fill: none; stroke: #4fa9b5; stroke-width: 1.5; }
.ol { fill: none; stroke: #dd9450; stroke-width: 1.5; }
.pl { fill: none; stroke: #8f86b8; stroke-width: 1; }
.k { fill: none; stroke: #46392f; stroke-width: 1.2; }
.w1 { stroke-width: 1; }
.w2 { stroke-width: 2.5; }
.tc { color: #4fa9b5; }
.type-t { font: bold 31px "Liberation Serif", serif; fill: #dd9450; }
.svg-t { font: bold 11px "Liberation Sans", sans-serif; fill: #3a3a3a; }
.zero-t { font: bold 11px "Liberation Sans", sans-serif; fill: #4fa9b5; }
.safe-t { font: bold 11px "Liberation Serif", serif; fill: #4fa9b5; }

/* main menu */
.menubar {
  display: flex;
  height: 27px;
  flex: none;
}
.menubar .home {
  width: 16px;
  height: 16px;
  margin: 6px 6px 0 4px;
}
.menubar > ul {
  display: flex;
  gap: 1px;
}
.menubar > ul > li {
  position: relative;
  padding-top: 3px;
}
.menubar > ul > li > button {
  height: 23px;
  padding: 0 7px 2px;
}
.menubar .open > button {
  padding: 0 6px 2px;
  background: #5285a6;
}
.open::after {
  content: "";
  position: absolute;
  top: 0;
  left: -6px;
  right: -6px;
  height: 31px;
  border: 3px solid #e0232b;
  z-index: 12;
}

/* drop-down menu */
.dropdown {
  position: absolute;
  top: 26px;
  left: 0;
  width: 255px;
  z-index: 10;
  border: 1px solid #383838;
  border-right-width: 2px;
  background: #525252;
  color: #eee;
  box-shadow: 2px 2px 3px rgba(0, 0, 0, 0.4);
}
.tearoff {
  height: 16px;
  background: radial-gradient(circle, #888 30%, transparent 40%) 1px 6px / 3px 3px repeat-x, #444;
}
.items {
  border-left: 20px solid #3e3e3e;
}
.items li {
  display: flex;
  align-items: center;
  height: 20px;
  position: relative;
}
.items svg {
  width: 16px;
  height: 16px;
  margin: 0 2px 0 -18px;
}
.items button {
  height: 20px;
  width: 208px;
  padding: 0 15px;
  text-align: left;
}
.items .opt {
  width: 12px;
  height: 12px;
  margin-left: 6px;
  padding: 0;
  border: 1px solid #bdbdbd;
  border-top-width: 3px;
}
.items .sub::after {
  content: "";
  margin-left: 10px;
  border: 4px solid transparent;
  border-left: 5px solid #eee;
  border-right: none;
}
.items .hot button:not(.opt) {
  background: #5285a6;
}
.items .hot::before {
  content: "";
  position: absolute;
  left: -25px;
  top: -4px;
  width: 108px;
  height: 29px;
  border: 3px solid #e0232b;
}
.items .head {
  height: 15px;
  padding-left: 3px;
  gap: 10px;
  color: #999;
}
.items .head::after {
  content: "";
  flex: 1;
  height: 1px;
  background: #777;
}
.items .line {
  height: 5px;
}
.items .line::after {
  content: "";
  flex: 1;
  height: 1px;
  background: #777;
}
.items .short {
  padding-left: 15px;
}

/* status line */
.status {
  display: flex;
  align-items: center;
  flex: none;
  height: 27px;
  padding: 0 0 2px 10px;
  background: repeating-linear-gradient(#777 0 1px, transparent 1px 3px) 2px 3px / 1px 22px no-repeat;
}
.status button {
  width: 23px;
  height: 23px;
  flex: none;
  display: flex;
  align-items: center;
  justify-content: center;
}
.status button svg {
  width: 20px;
  height: 20px;
}
.status .bar {
  width: 6px;
  height: 20px;
  margin: 0 8px 0 9px;
}
.status .caret {
  width: 8px;
  height: 5px;
  margin: 0 5px;
}
.on {
  background: #5285a6;
}
.combo {
  display: flex;
  flex: none;
  height: 20px;
  background: #5b5b5b;
}
.combo select {
  flex: 1;
  min-width: 0;
  padding-left: 3px;
}
.combo .drop {
  display: flex;
  align-items: center;
  justify-content: center;
  width: 20px;
  border-left: 1px solid #4c4c4c;
}
.combo .drop svg {
  width: 10px;
  height: 6px;
}
.mode {
  width: 97px;
}
.status input {
  height: 21px;
  padding: 0 4px;
  flex: none;
}
.status .live {
  width: 99px;
  background: #3f3f3f;
  border: 1px solid #383838;
}
.status .sym {
  width: 278px;
  margin-right: 5px;
  background: #3f3f3f;
  border: 1px solid #383838;
}
.status .entry {
  margin: 0 8px 0 5px;
}
.status .name {
  width: 164px;
  height: 18px;
  background: #2b2b2b;
  border-radius: 2px;
}

/* shelf */
.shelf {
  display: flex;
  flex: none;
  height: 72px;
  border-top: 2px solid #333;
  border-bottom: 3px solid #363636;
  padding: 3px 0 0 10px;
  background: repeating-linear-gradient(#777 0 1px, transparent 1px 3px) 2px 3px / 1px 60px no-repeat;
}
.shelf-side {
  display: flex;
  flex-direction: column;
  align-items: center;
  gap: 24px;
  width: 20px;
  height: 62px;
  padding-top: 11px;
  background: #383838;
}
.shelf-side svg {
  width: 12px;
  height: 12px;
}
.lines {
  width: 10px;
  height: 5px;
  border: solid #999;
  border-width: 2px 0;
}
.shelf-main {
  flex: 1;
  margin-left: 3px;
  min-width: 0;
}
.tabs {
  display: flex;
  height: 18px;
  padding: 2px 0 0 1px;
  background: #383838;
  gap: 2px;
}
.tabs > * {
  flex: none;
  height: 16px;
  padding: 0 10px;
  line-height: 16px;
  background: #3b3b3b;
  border: 1px solid #303030;
  border-bottom: none;
  color: #8e8e8e;
}
.tabs .active {
  background: #444;
  border-color: #444;
  color: #eee;
}
.tabs .bright {
  color: #c8c8c8;
}
.tabs .blank {
  width: 274px;
}
.tools {
  display: flex;
  align-items: center;
  height: 42px;
  padding-left: 4px;
}
.tools button {
  display: flex;
  justify-content: center;
  flex: none;
  width: 35px;
}
.tools button svg {
  width: 28px;
  height: 28px;
}
.tools .wide svg {
  width: 35px;
  height: 35px;
}
.tools i {
  flex: none;
  width: 2px;
  height: 35px;
  margin: 0 5px;
  background: #8b8b8b;
}
.group {
  display: flex;
  align-items: center;
  margin-left: 257px;
}

/* work area */
main {
  display: flex;
  flex: 1;
  min-height: 0;
}
.toolbox {
  display: flex;
  flex-direction: column;
  gap: 1px;
  flex: none;
  width: 43px;
  padding-right: 7px;
  box-shadow: inset -3px 0 #383838;
}
.toolbox button {
  display: flex;
  align-items: center;
  justify-content: center;
  flex: none;
  width: 36px;
  height: 36px;
}
.toolbox svg {
  width: 30px;
  height: 30px;
}
.toolbox .last {
  margin-top: 37px;
}
.toolbox hr {
  width: 36px;
  height: 2px;
  margin: 4px 0;
  border: none;
  background: #9a9a9a;
}
.grip {
  height: 6px;
  margin: 2px 0 3px;
  background: radial-gradient(circle, #888 30%, transparent 40%) 0 0 / 3px 3px;
}
.outliner {
  display: flex;
  flex-direction: column;
  flex: none;
  width: 264px;
}
.title {
  height: 18px;
  padding: 2px 0 0 1px;
  background: #383838;
}
h2 {
  display: inline-block;
  height: 16px;
  margin: 0;
  padding: 0 10px;
  background: #444;
  color: #eee;
  font-size: 11px;
  font-weight: normal;
  line-height: 16px;
}
.body {
  display: flex;
  flex-direction: column;
  flex: 1;
  min-height: 0;
  padding: 1px 4px 0 3px;
}
.panel-menu {
  display: flex;
  gap: 15px;
  padding-left: 7px;
}
.search {
  display: flex;
  align-items: center;
  height: 26px;
  padding: 5px 1px 1px 4px;
  gap: 7px;
}
.search .frame {
  width: 16px;
  height: 16px;
}
.box {
  display: flex;
  align-items: center;
  flex: 1;
  height: 18px;
  padding: 0 4px 0 3px;
  background: #2b2b2b;
  border-radius: 2px;
}
.box input {
  flex: 1;
  min-width: 0;
}
.box input::placeholder {
  color: #8a8a8a;
}
.box .arrow {
  width: 10px;
  height: 6px;
}
.tree {
  display: flex;
  flex: 1;
  min-height: 0;
  background: #373737;
}
.tree ul {
  flex: 1;
  margin-right: 2px;
}
.tree li {
  display: flex;
  align-items: center;
  gap: 3px;
  height: 20px;
  padding-left: 35px;
}
.tree li svg {
  width: 16px;
  height: 16px;
}
.tree .dim {
  color: #6a6a6a;
}
.tree .selected {
  background: #434e5c;
}
.scroll {
  display: flex;
  flex-direction: column;
  width: 10px;
}
.up {
  margin: 4px 0 4px;
  border: 5px solid transparent;
  border-top: none;
  border-bottom: 5px solid #bdbdbd;
}
.thumb {
  flex: 1;
  background: #5e5e5e;
  border-radius: 3px 3px 0 0;
}

/* 3D view */
.view {
  display: flex;
  flex-direction: column;
  flex: 1;
  min-width: 0;
  margin: 3px 0 0 5px;
  border: solid #858585;
  border-width: 1px 0 0 1px;
  box-shadow: -5px 0 #383838, 0 -3px #383838;
}
.view .panel-menu {
  height: 18px;
  padding-left: 8px;
  gap: 16px;
  line-height: 18px;
}
.view-tools {
  display: flex;
  align-items: center;
  flex: none;
  height: 20px;
  padding-bottom: 1px;
}
.view-tools button {
  display: flex;
  align-items: center;
  justify-content: center;
  flex: none;
  width: 19px;
  height: 19px;
}
.view-tools button svg {
  width: 16px;
  height: 16px;
}
.view-tools .full svg {
  width: 18px;
  height: 18px;
}
.view-tools .bar {
  width: 5px;
  height: 15px;
  margin: 0 3px;
}
.view-tools input {
  width: 38px;
  height: 14px;
  padding: 0 5px;
  flex: none;
  background: #2b2b2b;
  border-radius: 2px;
}
.view-tools .exposure {
  margin: 0 3px 0 237px;
}
.view-tools .cm {
  margin: 0 3px 0 2px;
  color: #1d5560;
  font-size: 6px;
  background: radial-gradient(circle, #4fb3b9 5px, #245560 6px, #5285a6 7px);
}
.space {
  width: 198px;
  height: 17px;
}
.scene {
  flex: 1;
  width: 100%;
  min-height: 0;
  background: #5c5c5c;
}
.grid {
  fill: none;
  stroke: #424242;
}
.axis {
  fill: none;
  stroke: #404040;
  stroke-width: 2;
}
.north {
  font: 20px "Liberation Sans", sans-serif;
  fill: #10105e;
}
```
